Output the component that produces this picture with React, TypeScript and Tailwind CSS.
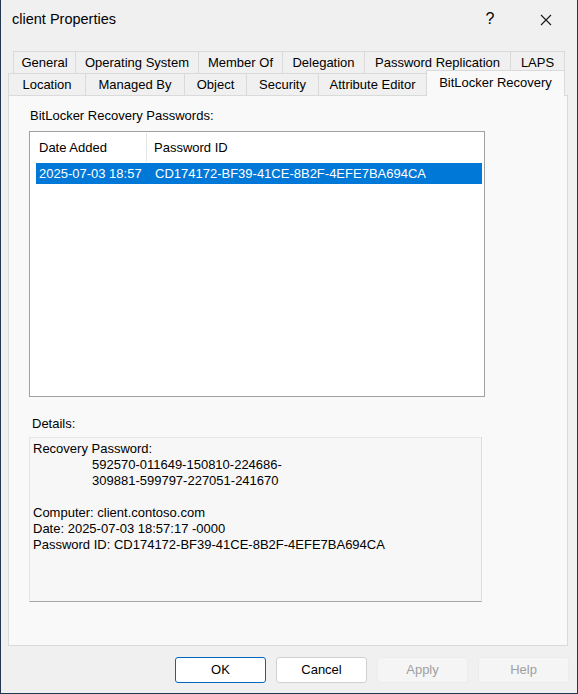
import React from "react";

const row1: [string, string][] = [
  ["General", "w-[62px]"],
  ["Operating System", "w-[123px]"],
  ["Member Of", "w-[84px]"],
  ["Delegation", "w-[82px]"],
  ["Password Replication", "w-[146px]"],
  ["LAPS", "w-[55px]"],
];

const row2: [string, string][] = [
  ["Location", "w-[77px]"],
  ["Managed By", "w-[99px]"],
  ["Object", "w-[62px]"],
  ["Security", "w-[72px]"],
  ["Attribute Editor", "w-[108px]"],
];

export default function App() {
  return (
    <div className="w-[578px] h-[694px] bg-[#23384f] font-['Liberation_Sans',Arial,sans-serif] text-[13px] leading-[16px] text-black">
      <div className="ml-px w-[576px] h-[693px] bg-[#f0f0f0] flex flex-col">
        {/* Title bar */}
        <div className="h-[38px] flex items-center pl-[11px] pr-[25px]">
          <div className="text-[14.5px] flex-1">client Properties</div>
          <div className="text-[16px] w-[14px] text-center mr-[43px]">?</div>
          <svg width="12" height="12" viewBox="0 0 12 12" className="mt-[1px]">
            <path d="M1 1 L11 11 M11 1 L1 11" stroke="#1a1a1a" strokeWidth="1.1" fill="none" />
          </svg>
        </div>

        {/* Tabs */}
        <div className="mt-[13px] flex flex-col">
          <div className="flex h-[22px] pl-[12px]">
            {row1.map(([t, w], i) => (
              <div
                key={t}
                className={`${w} h-[22px] flex items-center justify-center border-t border-l border-[#dadada] ${i === row1.length - 1 ? "border-r" : ""}`}
              >
                {t}
              </div>
            ))}
          </div>
          <div className="flex items-end h-[22px] pl-[7px] relative z-10">
            {row2.map(([t, w]) => (
              <div
                key={t}
                className={`${w} h-[22px] flex items-center justify-center border-t border-l border-[#dadada]`}
              >
                {t}
              </div>
            ))}
            <div className="w-[139px] h-[26px] -mb-px flex items-center justify-center bg-[#f9f9f9] border border-b-0 border-[#dadada] pb-[1px]">
              BitLocker Recovery
            </div>
          </div>
        </div>

        {/* Panel */}
        <div className="ml-[7px] w-[560px] h-[551px] bg-[#f9f9f9] border border-[#dadada] flex flex-col pt-[12px]">
          <div className="ml-[21px]">BitLocker Recovery Passwords:</div>
          <div className="ml-[20px] mt-[7px] w-[456px] h-[266px] bg-white border border-[#a0a0a0] flex flex-col">
            <div className="h-[31px] flex items-center">
              <div className="w-[117px] pl-[9px] h-[29px] flex items-center border-r border-[#e5e5e5]">Date Added</div>
              <div className="pl-[7px]">Password ID</div>
            </div>
            <div className="ml-[6px] mr-[2px] h-[21px] bg-[#0078d7] text-white flex items-center">
              <div className="w-[119px] pl-[3px]">2025-07-03 18:57</div>
              <div>CD174172-BF39-41CE-8B2F-4EFE7BA694CA</div>
            </div>
          </div>

          <div className="ml-[23px] mt-[19px]">Details:</div>
          <div className="ml-[20px] mt-[5px] w-[453px] h-[165px] bg-[#f7f7f7] border border-[#e6e6e6] border-b-[#a8a8a8] border-r-[#dcdcdc] pt-[3px] pl-[3px]">
            <div>Recovery Password:</div>
            <div className="ml-[59px]">592570-011649-150810-224686-</div>
            <div className="ml-[59px]">309881-599797-227051-241670</div>
            <div className="h-[16px]"></div>
            <div>Computer: client.contoso.com</div>
            <div>Date: 2025-07-03 18:57:17 -0000</div>
            <div>Password ID: CD174172-BF39-41CE-8B2F-4EFE7BA694CA</div>
          </div>
        </div>

        {/* Buttons */}
        <div className="mt-[11px] flex justify-end gap-[10px] pr-[8px]">
          <div className="w-[91px] h-[26px] flex items-center justify-center bg-white border border-[#0067c0] rounded-[3px]">OK</div>
          <div className="w-[91px] h-[26px] flex items-center justify-center bg-white border border-[#d0d0d0] rounded-[3px]">Cancel</div>
          <div className="w-[91px] h-[26px] flex items-center justify-center bg-[#f5f5f5] border border-[#ececec] rounded-[3px] text-[#a0a0a0]">Apply</div>
          <div className="w-[91px] h-[26px] flex items-center justify-center bg-[#f5f5f5] border border-[#ececec] rounded-[3px] text-[#a0a0a0]">Help</div>
        </div>
      </div>
    </div>
  );
}
